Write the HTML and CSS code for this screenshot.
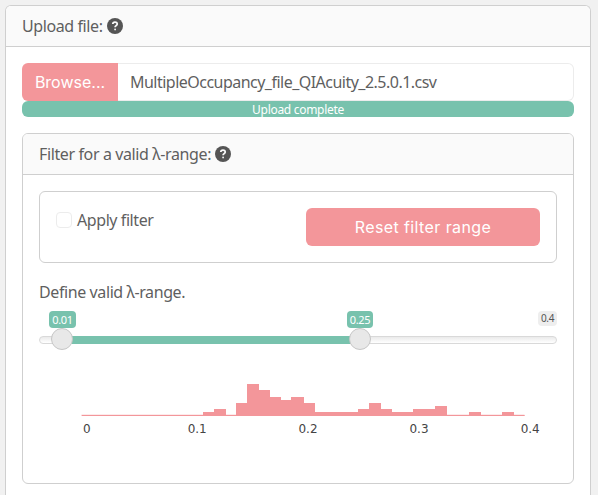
FILE: index.html
```html
<!DOCTYPE html>
<html lang="en">
<head>
<meta charset="utf-8">
<title>Upload file</title>
<link rel="stylesheet" href="styles.css">
</head>
<body>
<section class="card outer">
  <header class="card-header"><span class="t-upload">Upload file:</span>
    <svg class="help" viewBox="0 0 16 16"><circle cx="8" cy="8" r="8"/><path d="M5.8 6.1C5.8 3.4 10.2 3.4 10.2 6c0 1.6-2.1 1.7-2.1 3.2" /><rect x="7.2" y="10.6" width="1.8" height="1.8" rx=".8"/></svg>
  </header>
  <div class="card-body">
    <div class="file-group">
      <button class="btn browse"><span>Browse...</span></button>
      <div class="file-name"><span>MultipleOccupancy_file_QIAcuity_2.5.0.1.csv</span></div>
    </div>
    <div class="progress">Upload complete</div>
    <section class="card inner">
      <header class="card-header"><span class="t-filter">Filter for a valid λ-range:</span>
        <svg class="help" viewBox="0 0 16 16"><circle cx="8" cy="8" r="8"/><path d="M5.8 6.1C5.8 3.4 10.2 3.4 10.2 6c0 1.6-2.1 1.7-2.1 3.2" /><rect x="7.2" y="10.6" width="1.8" height="1.8" rx=".8"/></svg>
      </header>
      <div class="card-body">
        <div class="filter-box">
          <label class="check"><span class="box"></span><span class="t-apply">Apply filter</span></label>
          <button class="btn reset">Reset filter range</button>
        </div>
        <div class="define">Define valid λ-range.</div>
        <div class="slider">
          <span class="tag from">0.01</span>
          <span class="tag to">0.25</span>
          <span class="tag max">0.4</span>
          <div class="track"></div>
          <div class="range"></div>
          <span class="handle h1"></span>
          <span class="handle h2"></span>
        </div>
        <svg class="chart" width="517" height="66" viewBox="39 374 517 66">
          <path class="bars" d="M82 416V415H203V412H214V409H226V415H236V403H247V384H259V390H270V397H281V400H291V397H304V403H315V412H358V409H369V403H381V409H392V412H413V409H435V406H447V415H469V412H481V415H502V412H514V415H524.5V416Z"/>
          <path class="base" d="M81.500 415.300H524.500"/>
          <g class="ticks">
            <text x="86.7" y="433">0</text>
            <text x="197.2" y="433">0.1</text>
            <text x="308" y="433">0.2</text>
            <text x="419" y="433">0.3</text>
            <text x="530.2" y="433">0.4</text>
          </g>
        </svg>
      </div>
    </section>
  </div>
</section>
</body>
</html>
```
FILE: styles.css
```css
* { box-sizing: border-box; }
body {
  margin: 0;
  padding: 5px 5px 0;
  height: 495px;
  overflow: hidden;
  background: #f1f1f1;
  color: #5f5f5f;
  font: 16px/24px "Noto Sans", "Open Sans", sans-serif;
}
.card {
  background: #fff;
  border: 1px solid #cfcfcf;
  border-radius: 6px;
}
.outer {
  width: 586px;
  height: 490px;
  border-bottom: 0;
  border-radius: 6px 6px 0 0;
}
.inner { height: 351px; margin-top: 16px; }
.card-header {
  display: flex;
  align-items: center;
  height: 41px;
  padding-left: 16px;
  background: #fafafa;
  border-bottom: 1px solid #cfcfcf;
  border-radius: 5px 5px 0 0;
  white-space: nowrap;
}
.card-body { padding: 16px 16px 0; }
.t-upload { width: 80px; letter-spacing: -.4px; }
.t-filter { width: 171px; letter-spacing: -.38px; }
.help { width: 16px; height: 16px; margin-left: 5px; fill: #555; }
.help path { fill: none; stroke: #fafafa; stroke-width: 1.8; }
.help rect { fill: #fafafa; }
.btn {
  border: 0;
  padding: 0 0 1px;
  border-radius: 6px;
  background: #f3969a;
  color: #fff;
  height: 38px;
  font: 16px/24px Inter, sans-serif;
  white-space: nowrap;
}
.file-group {
  display: flex;
  height: 38px;
}
.browse {
  width: 96px;
  border-radius: 6px 0 0 6px;
}
.file-name {
  flex: 1;
  padding: 6px 12px;
  border: 1px solid #ececec;
  border-left: 0;
  border-radius: 0 6px 6px 0;
  letter-spacing: -.52px;
  white-space: nowrap;
}
.progress {
  height: 16px;
  border-radius: 6px;
  background: #78c2ad;
  color: #fff;
  font-size: 12px;
  line-height: 17px;
  text-align: center;
  letter-spacing: -.3px;
}
.filter-box {
  display: flex;
  justify-content: space-between;
  height: 72px;
  padding: 16px;
  border: 1px solid #cfcfcf;
  border-radius: 6px;
}
.check {
  display: flex;
  align-items: center;
  gap: 5px;
  height: 24px;
  white-space: nowrap;
  letter-spacing: -.42px;
}
.box {
  width: 16px;
  height: 16px;
  border: 1px solid #ececec;
  border-radius: 4px;
}
.reset { width: 234px; letter-spacing: .4px; }
.define {
  margin-top: 17px;
  letter-spacing: -.4px;
}
.slider {
  position: relative;
  height: 70px;
}
.tag {
  position: absolute;
  top: 7px;
  height: 17px;
  border-radius: 4px;
  background: #78c2ad;
  color: #fff;
  font-size: 11px;
  line-height: 17px;
  text-align: center;
  letter-spacing: -.3px;
}
.from { left: 10px; width: 27px; }
.to { left: 308px; width: 26px; }
.max {
  right: 0;
  width: 19px;
  height: 15px;
  background: #eee;
  color: #555;
  font-size: 10px;
  line-height: 15px;
}
.track {
  position: absolute;
  top: 32px;
  width: 100%;
  height: 8px;
  border: 1px solid #d9d9d9;
  border-radius: 8px;
  background: linear-gradient(#eaeaea, #fff);
}
.range {
  position: absolute;
  top: 32px;
  left: 23px;
  width: 298px;
  height: 8px;
  background: #78c2ad;
}
.handle {
  position: absolute;
  top: 24px;
  width: 22px;
  height: 22px;
  border: 1px solid #c6c6c6;
  border-radius: 50%;
  background: #e8e8e8;
}
.h1 { left: 12px; }
.h2 { left: 310px; }
.chart { display: block; }
.bars { fill: #f3969a; }
.base { stroke: #f3969a; stroke-width: 1; }
.ticks {
  fill: #444;
  font: 12px "DejaVu Sans", sans-serif;
  text-anchor: middle;
}
```
